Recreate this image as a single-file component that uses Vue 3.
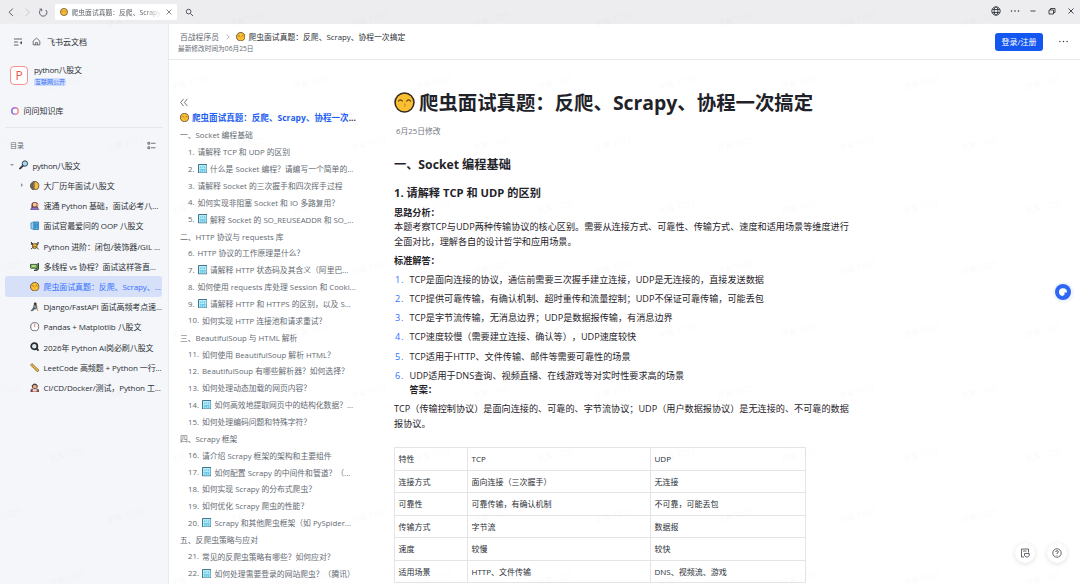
<script setup>
import { ref } from 'vue'

const current = ref(5)

const docs = [
  { icon: 'moon', title: '大厂历年面试八股文', arrow: true },
  { icon: 'woman', title: '速通 Python 基础，面试必考八...' },
  { icon: 'book', title: '面试官最爱问的 OOP 八股文' },
  { icon: 'bee', title: 'Python 进阶：闭包/装饰器/GIL ...' },
  { icon: 'mask', title: '多线程 vs 协程？面试这样答直...' },
  { icon: 'face', title: '爬虫面试真题：反爬、Scrapy、...' },
  { icon: 'climber', title: 'Django/FastAPI 面试高频考点速...' },
  { icon: 'clock', title: 'Pandas + Matplotlib 八股文' },
  { icon: 'lens', title: '2026年 Python AI岗必刷八股文' },
  { icon: 'ruler', title: 'LeetCode 高频题 + Python 一行...' },
  { icon: 'man', title: 'CI/CD/Docker/测试，Python 工...' }
]

const outline = [
  { title: '一、Socket 编程基础', top: true },
  { num: '1.', title: '请解释 TCP 和 UDP 的区别' },
  { num: '2.', box: true, title: '什么是 Socket 编程？请编写一个简单的...' },
  { num: '3.', title: '请解释 Socket 的三次握手和四次挥手过程' },
  { num: '4.', title: '如何实现非阻塞 Socket 和 IO 多路复用？' },
  { num: '5.', box: true, title: '解释 Socket 的 SO_REUSEADDR 和 SO_...' },
  { title: '二、HTTP 协议与 requests 库', top: true },
  { num: '6.', title: 'HTTP 协议的工作原理是什么？' },
  { num: '7.', box: true, title: '请解释 HTTP 状态码及其含义（阿里巴...' },
  { num: '8.', title: '如何使用 requests 库处理 Session 和 Cooki...' },
  { num: '9.', box: true, title: '请解释 HTTP 和 HTTPS 的区别，以及 S...' },
  { num: '10.', title: '如何实现 HTTP 连接池和请求重试？' },
  { title: '三、BeautifulSoup 与 HTML 解析', top: true },
  { num: '11.', title: '如何使用 BeautifulSoup 解析 HTML？' },
  { num: '12.', title: 'BeautifulSoup 有哪些解析器？如何选择？' },
  { num: '13.', title: '如何处理动态加载的网页内容？' },
  { num: '14.', box: true, title: '如何高效地提取网页中的结构化数据？...' },
  { num: '15.', title: '如何处理编码问题和特殊字符？' },
  { title: '四、Scrapy 框架', top: true },
  { num: '16.', title: '请介绍 Scrapy 框架的架构和主要组件' },
  { num: '17.', box: true, title: '如何配置 Scrapy 的中间件和管道？（...' },
  { num: '18.', title: '如何实现 Scrapy 的分布式爬虫？' },
  { num: '19.', title: '如何优化 Scrapy 爬虫的性能？' },
  { num: '20.', box: true, title: 'Scrapy 和其他爬虫框架（如 PySpider...' },
  { title: '五、反爬虫策略与应对', top: true },
  { num: '21.', title: '常见的反爬虫策略有哪些？如何应对？' },
  { num: '22.', box: true, title: '如何处理需要登录的网站爬虫？（腾讯）' }
]

const answers = [
  'TCP是面向连接的协议，通信前需要三次握手建立连接，UDP是无连接的，直接发送数据',
  'TCP提供可靠传输，有确认机制、超时重传和流量控制；UDP不保证可靠传输，可能丢包',
  'TCP是字节流传输，无消息边界；UDP是数据报传输，有消息边界',
  'TCP速度较慢（需要建立连接、确认等），UDP速度较快',
  'TCP适用于HTTP、文件传输、邮件等需要可靠性的场景',
  'UDP适用于DNS查询、视频直播、在线游戏等对实时性要求高的场景'
]

const rows = [
  ['特性', 'TCP', 'UDP'],
  ['连接方式', '面向连接（三次握手）', '无连接'],
  ['可靠性', '可靠传输，有确认机制', '不可靠，可能丢包'],
  ['传输方式', '字节流', '数据报'],
  ['速度', '较慢', '较快'],
  ['适用场景', 'HTTP、文件传输', 'DNS、视频流、游戏']
]
</script>

<template>
  <svg class="sprite" aria-hidden="true">
    <symbol id="face" viewBox="0 0 20 20">
      <circle cx="10" cy="10" r="9" fill="#fbbf32" stroke="#3a2b20" stroke-width="1.5" />
      <path d="M4 9q2-3 4.200 0M11.800 9q2-3 4.200 0" fill="none" stroke="#5a3712" stroke-width="1.100" />
      <path d="M9.500 11.200q2 .2.600 1.300 1.700.4-.3 1.600" fill="none" stroke="#b5701f" stroke-width=".7" />
    </symbol>
    <symbol id="moon" viewBox="0 0 20 20">
      <circle cx="10" cy="10" r="9" fill="#f5bd42" stroke="#28303a" stroke-width="1.600" />
      <path d="M10 1a9 9 0 0 0 0 18z" fill="#6a6355" />
      <path d="M10 1q-5 9 0 18" fill="#c08a3c" />
    </symbol>
    <symbol id="woman" viewBox="0 0 20 20">
      <path d="M3 16V9a7 7 0 0 1 14 0v7z" fill="#764533" />
      <circle cx="10" cy="8" r="4.300" fill="#f9c49b" />
      <path d="M1 19q1-6 7-6h5q5 1 6 6z" fill="#9072c7" stroke="#45344f" />
      <path d="M13 8l5-2-2 8z" fill="#e0a275" />
    </symbol>
    <symbol id="book" viewBox="0 0 20 20">
      <path d="M8 2h10v16H8z" fill="#58b4ee" stroke="#245e91" stroke-width="1.400" />
      <path d="M2 4l6-2v16l-6-2z" fill="#8fd0f2" stroke="#2f76a8" stroke-width="1.400" />
      <path d="M11 5v10M15 5v10" stroke="#1b74b5" stroke-width="1.800" />
    </symbol>
    <symbol id="bee" viewBox="0 0 20 20">
      <path d="M2 2l6 6M18 2l-6 6M2 17l6-5M18 17l-6-5M3 3q-2 5 4 6M17 3q2 5-4 6" fill="none" stroke="#31281e" stroke-width="1.900" />
      <ellipse cx="10" cy="10.500" rx="5" ry="5.500" fill="#edae3c" stroke="#33281f" stroke-width="1.300" />
      <path d="M7 12h6" stroke="#49331c" stroke-width="1.200" />
    </symbol>
    <symbol id="mask" viewBox="0 0 20 20">
      <path d="M1 5h14v8q-3 3-5 0H6q-3 2-5-1z" fill="#76bd45" stroke="#263528" stroke-width="1.600" />
      <path d="M4 7h8v3H4z" fill="#c3e69a" />
      <path d="M17.500 2v12q-2 4-9 4" stroke="#334832" stroke-width="3" fill="none" />
    </symbol>
    <symbol id="climber" viewBox="0 0 20 20">
      <circle cx="11" cy="4" r="3" fill="#4a3024" />
      <path d="M8 7h6l1 7-6 1-4 4H2l5-7z" fill="#416f8d" stroke="#30353c" />
      <path d="M8 8l5 4M14 13l3 6" stroke="#df9c5c" stroke-width="2.300" />
    </symbol>
    <symbol id="clock" viewBox="0 0 20 20">
      <circle cx="10" cy="10" r="8.600" fill="#fff" stroke="#4b4f55" stroke-width="1.700" />
      <path d="M10 4v7" stroke="#df505a" stroke-width="1.700" />
      <path d="M3 10h1M16 10h1M10 16v1" stroke="#555" />
    </symbol>
    <symbol id="lens" viewBox="0 0 20 20">
      <circle cx="9" cy="9" r="6.500" fill="#e1e7ea" stroke="#292e31" stroke-width="3.600" />
      <path d="M14 14l4 4" stroke="#292e31" stroke-width="4" />
    </symbol>
    <symbol id="ruler" viewBox="0 0 20 20">
      <path d="M1 4l3-3 15 14-3 4z" fill="#f2be45" stroke="#67491d" stroke-width="1.300" />
      <path d="M6 5L4 7M9 8l-2 2M12 11l-2 2M15 14l-2 2" stroke="#67491d" />
    </symbol>
    <symbol id="man" viewBox="0 0 20 20">
      <path d="M4 10V5q6-8 12 0v5z" fill="#3f3230" />
      <circle cx="10" cy="8" r="4.200" fill="#e5ab83" />
      <path d="M2 19v-5l5-2h6l5 2v5z" fill="#bd4f4a" stroke="#383332" stroke-width="1.400" />
      <path d="M6 13h8v5H6z" fill="#e9e4df" />
    </symbol>
    <symbol id="glass" viewBox="0 0 20 20">
      <path d="M9 11l-7 7" stroke="#333d48" stroke-width="4" stroke-linecap="round" />
      <circle cx="12.500" cy="7.500" r="5.700" fill="#a4d8f3" stroke="#333d48" stroke-width="2" />
    </symbol>
    <symbol id="box" viewBox="0 0 20 20">
      <path d="M1 1h18v18H1z" fill="#b5ecfa" stroke="#3c6a82" stroke-width="2" />
      <path d="M6 5v4M14 5v4M10 5v3M4 12h12M6 13v4M14 13v4M10 12v5" fill="none" stroke="#3fb4dc" stroke-width="1.500" />
    </symbol>
  </svg>

  <div class="window">
    <header class="titlebar">
      <div class="nav">
        <svg viewBox="0 0 10 10"><path d="M6.500 1.500L3 5l3.500 3.500" /></svg>
        <svg viewBox="0 0 10 10" class="off"><path d="M3.500 1.500L7 5 3.500 8.500" /></svg>
        <svg viewBox="0 0 10 10"><path d="M3 2.300A3.500 3.500 0 1 0 7.500 2.800M1.500 2h2v2" /></svg>
      </div>
      <div class="tab">
        <svg class="tab-face"><use href="#face" /></svg>
        <span class="tab-name">爬虫面试真题：反爬、Scrapy</span>
        <svg class="tab-x" viewBox="0 0 10 10"><path d="M2 2l6 6M8 2L2 8" /></svg>
      </div>
      <svg class="tab-search" viewBox="0 0 10 10"><circle cx="4" cy="4" r="2.600" /><path d="M6 6l3 3" /></svg>
      <div class="controls">
        <svg viewBox="0 0 10 10"><circle cx="5" cy="5" r="4.200" /><ellipse cx="5" cy="5" rx="1.900" ry="4.200" /><path d="M1.200 3.500h7.600M1.200 6.500h7.600" /></svg>
        <svg viewBox="0 0 10 10" class="dots"><circle cx="1.500" cy="5" r=".8" /><circle cx="5" cy="5" r=".8" /><circle cx="8.500" cy="5" r=".8" /></svg>
        <svg viewBox="0 0 10 10"><path d="M2.500 5h5" /></svg>
        <svg viewBox="0 0 10 10"><path d="M2 4h4.500v4H2zM3.500 4V2.500H8v4H6.500" /></svg>
        <svg viewBox="0 0 10 10"><path d="M2.500 2.500l5 5M7.500 2.500l-5 5" /></svg>
      </div>
    </header>

    <div class="body">
      <aside class="sidebar">
        <div class="home">
          <svg class="fold" viewBox="0 0 10 10"><path d="M1 2h8M1 5h4M1 8h4.500" /><path d="M9 4v3.500L6.500 5.700z" fill="#50555d" stroke="none" /></svg>
          <svg class="house" viewBox="0 0 10 10"><path d="M1.300 4.500L5 1.200l3.700 3.300v4.200H1.300zM3.800 8.700V6.300h2.400v2.400" /></svg>
          <span>飞书云文档</span>
        </div>
        <div class="wiki">
          <span class="logo">P</span>
          <div class="wiki-text">
            <span class="wiki-name">python八股文</span>
            <span class="tag">互联网公开</span>
          </div>
        </div>
        <div class="ask">
          <span class="ring"></span>
          <span>问问知识库</span>
        </div>
        <div class="catalog">
          <span>目录</span>
          <svg viewBox="0 0 10 10"><path d="M1 1.500h2v2H1zM1 6.500h2v2H1zM4.500 2.500H9.500M4.500 7.500H9.500" /></svg>
        </div>
        <ul class="tree">
          <li class="root">
            <span class="tri down"></span>
            <svg class="emoji"><use href="#glass" /></svg>
            <span class="name">python八股文</span>
          </li>
          <li v-for="(d, i) in docs" :key="i" :class="{ active: i === current }" @click="current = i">
            <span class="tri" :class="{ none: !d.arrow }"></span>
            <svg class="emoji"><use :href="'#' + d.icon" /></svg>
            <span class="name">{{ d.title }}</span>
          </li>
        </ul>
      </aside>

      <section class="page">
        <div class="topbar">
          <div class="crumbs">
            <div class="path">
              <span class="space">百战程序员</span>
              <svg class="sep" viewBox="0 0 10 10"><path d="M3.500 2L6.500 5 3.500 8" /></svg>
              <svg class="crumb-face"><use href="#face" /></svg>
              <span>爬虫面试真题：反爬、Scrapy、协程一次搞定</span>
            </div>
            <div class="modified">最新修改时间为06月25日</div>
          </div>
          <button class="login">登录/注册</button>
          <svg class="more" viewBox="0 0 10 10"><circle cx="1" cy="5" r=".8" /><circle cx="5" cy="5" r=".8" /><circle cx="9" cy="5" r=".8" /></svg>
        </div>

        <div class="content">
          <nav class="outline">
            <svg class="collapse" viewBox="0 0 10 10"><path d="M4 1L.7 5 4 9M8.200 1L4.900 5l3.300 4" /></svg>
            <div class="outline-title">
              <svg><use href="#face" /></svg>
              <span>爬虫面试真题：反爬、Scrapy、协程一次<i>...</i></span>
            </div>
            <div v-for="(o, i) in outline" :key="i" class="entry" :class="{ top: o.top }">
              <span v-if="o.num">{{ o.num }}</span>
              <svg v-if="o.box"><use href="#box" /></svg>
              <span>{{ o.title }}</span>
            </div>
          </nav>

          <article>
            <h1>
              <svg><use href="#face" /></svg>
              <span>爬虫面试真题：反爬、Scrapy、协程一次搞定</span>
            </h1>
            <div class="date">6月25日修改</div>
            <h2>一、Socket 编程基础</h2>
            <h3>1. 请解释 TCP 和 UDP 的区别</h3>
            <h4>思路分析：</h4>
            <p>本题考察TCP与UDP两种传输协议的核心区别。需要从连接方式、可靠性、传输方式、速度和适用场景等维度进行<br>全面对比，理解各自的设计哲学和应用场景。</p>
            <h4 class="std">标准解答：</h4>
            <ol>
              <li v-for="(a, i) in answers" :key="i"><b>{{ i + 1 }}.</b><span>{{ a }}</span></li>
            </ol>
            <h4 class="ans">答案：</h4>
            <p class="result">TCP（传输控制协议）是面向连接的、可靠的、字节流协议；UDP（用户数据报协议）是无连接的、不可靠的数据<br>报协议。</p>
            <table>
              <tbody>
                <tr v-for="(r, i) in rows" :key="i">
                  <td v-for="c in r" :key="c">{{ c }}</td>
                </tr>
              </tbody>
            </table>
          </article>
        </div>
      </section>
    </div>

    <svg class="watermark" aria-hidden="true">
      <defs>
        <pattern id="wm" x="861" y="22" width="122" height="124" patternUnits="userSpaceOnUse">
          <text transform="translate(43 68) rotate(-14)">访客 7223</text>
          <text transform="translate(101 129) rotate(-14)">访客 7223</text>
          <text transform="translate(-21 129) rotate(-14)">访客 7223</text>
          <text transform="translate(101 5) rotate(-14)">访客 7223</text>
          <text transform="translate(-21 5) rotate(-14)">访客 7223</text>
        </pattern>
      </defs>
      <rect width="1080" height="584" fill="url(#wm)" />
    </svg>

    <div class="assistant">
      <svg viewBox="0 0 18 18">
        <circle cx="9" cy="9" r="8" fill="#2f66f2" />
        <path d="M5 9a4 4 0 1 1 8 .5h-2.500v2.300L8.500 13A4 4 0 0 1 5 9z" fill="#fff" />
      </svg>
    </div>
    <div class="helpers">
      <span>
        <svg viewBox="0 0 10 10"><path d="M4 9H1.500V1h7v3.500M3 3h3.500M4.500 5.500h4.700v2.200L7 9.300 4.500 7.700z" /></svg>
      </span>
      <span>
        <svg viewBox="0 0 10 10"><circle cx="5" cy="5" r="4.200" /><path d="M3.700 4q.1-1.300 1.400-1.300T6.400 4Q6.300 4.700 5 5.200v.8M5 6.800v.7" /></svg>
      </span>
    </div>
  </div>
</template>

<style>
body {
  overflow: hidden;
}
</style>

<style scoped>
* {
  box-sizing: border-box;
}
.sprite {
  position: absolute;
  width: 0;
  height: 0;
}
.window {
  position: relative;
  width: 1080px;
  height: 584px;
  overflow: hidden;
  display: flex;
  flex-direction: column;
  background: #fff;
  color: #2b2f36;
  font-family: "Open Sans", "Noto Sans CJK SC", sans-serif;
  font-size: 8px;
  white-space: nowrap;
  text-spacing-trim: space-all;
}
svg {
  display: block;
  flex: none;
  fill: none;
  stroke: #50555d;
  stroke-width: 0.9;
}
.sprite,
svg use {
  stroke: none;
}

/* title bar */
.titlebar {
  display: flex;
  align-items: center;
  height: 24px;
  flex: none;
  background: #ededef;
}
.nav {
  display: flex;
  gap: 5.5px;
  width: 55px;
  padding-left: 6px;
}
.nav svg {
  width: 10.5px;
  height: 10.5px;
}
.nav .off {
  stroke: #c5c7ca;
}
.tab {
  display: flex;
  align-items: center;
  width: 122px;
  height: 16px;
  padding: 0 3.5px 0 4.5px;
  background: #fff;
  border-radius: 2px;
}
.tab-face {
  width: 8px;
  height: 8px;
  margin-right: 4px;
}
.tab-name {
  width: 90px;
  font-size: 6.8px;
  color: #5c6066;
  -webkit-mask-image: linear-gradient(90deg, #000 80%, transparent);
}
.tab-x {
  width: 8px;
  height: 8px;
  margin-left: 3.5px;
}
.tab-search {
  width: 9px;
  height: 9px;
  margin-left: 8px;
  stroke-width: 1.1;
}
.controls {
  display: flex;
  align-items: center;
  gap: 8.6px;
  margin-left: auto;
  margin-right: 4.5px;
  margin-bottom: 2px;
}
.controls svg {
  width: 10px;
  height: 10px;
  stroke: #33373d;
}
.controls .dots,
.more {
  fill: #33373d;
  stroke: none;
}

.body {
  display: flex;
  flex: 1;
  min-height: 0;
}

/* sidebar */
.sidebar {
  width: 169px;
  flex: none;
  background: #f4f6f9;
  border-right: 1px solid #e8ebef;
}
.home {
  display: flex;
  align-items: center;
  height: 35px;
  padding-left: 13px;
}
.fold {
  width: 10px;
  height: 10px;
  margin-right: 9px;
}
.house {
  width: 9px;
  height: 9px;
  margin-right: 6px;
}
.wiki {
  display: flex;
  align-items: center;
  height: 33px;
  padding-left: 10px;
  gap: 6px;
}
.logo {
  width: 18px;
  height: 19px;
  line-height: 17px;
  text-align: center;
  border: 1px solid #f29392;
  border-radius: 4px;
  color: #ec5352;
  background: #fff;
  font-size: 12px;
}
.wiki-text {
  display: flex;
  flex-direction: column;
  align-items: flex-start;
  gap: 3px;
}
.wiki-name {
  line-height: 10px;
  letter-spacing: -0.3px;
}
.tag {
  padding: 0 1px;
  height: 8px;
  line-height: 8px;
  border-radius: 2px;
  background: #cddcff;
  color: #376cf0;
  font-size: 6px;
}
.ask {
  display: flex;
  align-items: center;
  gap: 5px;
  height: 36px;
  margin: 0 5px;
  padding: 2px 0 0 5.5px;
  border-bottom: 1px solid #e3e6ea;
}
.ring {
  width: 8px;
  height: 8px;
  border-radius: 50%;
  background:
    radial-gradient(circle, #fff 2.2px, transparent 2.7px),
    conic-gradient(#c46bdc, #f59a7f, #f79a80, #e58bc0, #6f7cf5, #8b74ee, #c46bdc);
}
.catalog {
  display: flex;
  align-items: center;
  justify-content: space-between;
  height: 27px;
  padding: 7px 12px 0 10px;
  color: #646a73;
  font-size: 7px;
}
.catalog svg {
  width: 9px;
  height: 9px;
}
.tree {
  margin: 0 6px 0 5px;
  padding: 0;
  list-style: none;
}
.tree li {
  display: flex;
  align-items: center;
  height: 20.24px;
  padding-left: 16px;
  border-radius: 3px;
}
.tree .root {
  padding-left: 5px;
}
.tree .active {
  background: #d6e0f8;
  color: #3370ff;
}
.name {
  letter-spacing: -0.1px;
}
.root .name {
  letter-spacing: -0.3px;
}
.tri {
  flex: none;
  width: 4px;
  margin-right: 5px;
}
.tri::before {
  content: '';
  display: block;
  width: 0;
  border: 2px solid transparent;
  border-left: 2.5px solid #8f959e;
  border-right: 0;
}
.tri.down::before {
  border: 2px solid transparent;
  border-top: 2.5px solid #8f959e;
  border-bottom: 0;
}
.tri.none {
  visibility: hidden;
}
.emoji {
  width: 9.5px;
  height: 9.5px;
  margin-right: 4px;
}

/* top bar */
.page {
  flex: 1;
  min-width: 0;
  display: flex;
  flex-direction: column;
}
.topbar {
  display: flex;
  align-items: center;
  height: 36px;
  flex: none;
  padding: 0 12px 0 9px;
  border-bottom: 1px solid #e6e8eb;
}
.crumbs {
  flex: 1;
  padding-top: 2px;
}
.path {
  display: flex;
  align-items: center;
  height: 12px;
  padding-left: 2px;
  font-size: 7.8px;
}
.space {
  color: #646a73;
}
.sep {
  width: 8px;
  height: 8px;
  margin: 0 4px 0 5px;
  stroke: #8f959e;
}
.crumb-face {
  width: 9.5px;
  height: 9.5px;
  margin-right: 3px;
}
.modified {
  font-size: 6.7px;
  line-height: 12px;
  color: #646a73;
}
.login {
  width: 48px;
  height: 18px;
  padding: 0;
  border: 0;
  border-radius: 3px;
  background: #1456f0;
  color: #fff;
  font: 8px "Open Sans", "Noto Sans CJK SC", sans-serif;
}
.more {
  width: 9px;
  height: 9px;
  margin-left: 16px;
}
.content {
  display: flex;
  flex: 1;
  min-height: 0;
}

/* outline */
.outline {
  width: 225px;
  flex: none;
  padding: 37.5px 0 0 11px;
  color: #646a73;
  font-size: 7.8px;
}
.collapse {
  width: 9px;
  height: 9px;
  margin-left: -0.5px;
}
.outline-title {
  display: flex;
  align-items: center;
  gap: 3px;
  height: 18px;
  margin-top: 2px;
  font-size: 8.55px;
  font-weight: 700;
  color: #1f5ff0;
}
.outline-title i {
  color: #2b2f36;
  font-style: normal;
}
.outline-title svg {
  width: 9px;
  height: 9px;
}
.entry {
  display: flex;
  align-items: center;
  gap: 3px;
  height: 16.86px;
  padding-left: 8px;
}
.entry.top {
  padding-left: 0;
}
.entry svg {
  width: 9.5px;
  height: 9.5px;
}

/* article */
h1,
h2,
h3,
h4,
p,
ol {
  margin: 0;
  padding: 0;
  color: #1f2329;
}
article {
  padding-top: 26px;
  font-size: 9.15px;
}
h1 {
  display: flex;
  align-items: center;
  gap: 4px;
  height: 32px;
  font-size: 19.4px;
}
h1 svg {
  width: 21px;
  height: 21px;
}
h1 span {
  line-height: 26px;
  padding-top: 1px;
}
.date {
  margin-top: 5px;
  padding-left: 2px;
  line-height: 16px;
  font-size: 7.8px;
  color: #73787f;
}
h2 {
  margin-top: 15px;
  line-height: 22px;
  font-size: 12.2px;
}
h3 {
  margin-top: 8px;
  line-height: 18px;
  font-size: 11.2px;
}
h4 {
  margin-top: 3px;
  line-height: 15px;
  font-size: 9.15px;
}
p {
  line-height: 14.6px;
}
.std {
  margin-top: 4px;
}
ol {
  margin-top: 2px;
  list-style: none;
}
ol b {
  flex: none;
  width: 15.5px;
  padding-left: 1px;
  color: #3370ff;
  font-weight: 400;
  letter-spacing: 0.8px;
}
ol li {
  display: flex;
  height: 19.1px;
  line-height: 19.1px;
}
.ans {
  margin-top: -2.5px;
  padding-left: 15.5px;
}
.result {
  margin-top: 5px;
}
table {
  width: 412px;
  margin-top: 16px;
  border-collapse: collapse;
  table-layout: fixed;
  font-size: 8px;
}
td {
  height: 22.5px;
  padding: 0 3.5px 1px;
  border: 1px solid #e2e4e7;
}
td:first-child {
  width: 73px;
}
td:nth-child(2) {
  width: 183px;
}

/* floating layer */
.watermark {
  position: absolute;
  inset: 0;
  width: 1080px;
  height: 584px;
  stroke: none;
  pointer-events: none;
}
.watermark text {
  fill: #1f2329;
  fill-opacity: 0.028;
  font-size: 8px;
}
.assistant {
  position: absolute;
  top: 281.5px;
  right: 6.5px;
  width: 21px;
  height: 21px;
  padding: 1.5px;
  border-radius: 50%;
  background: #f2f5fd;
}
.assistant svg {
  stroke: none;
}
.helpers {
  position: absolute;
  right: 13px;
  bottom: 21px;
  display: flex;
  gap: 12px;
}
.helpers span {
  display: flex;
  align-items: center;
  justify-content: center;
  width: 20px;
  height: 20px;
  border-radius: 50%;
  background: #fff;
  box-shadow: 0 1px 5px rgba(31, 35, 41, 0.14);
}
.helpers svg {
  width: 10px;
  height: 10px;
}
</style>
